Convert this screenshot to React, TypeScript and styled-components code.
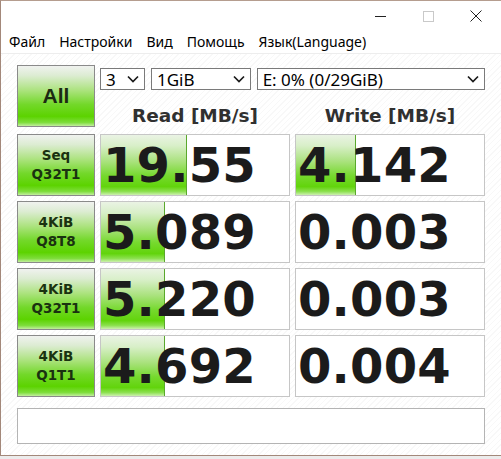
import React from "react";
import styled, { createGlobalStyle } from "styled-components";

const GlobalStyle = createGlobalStyle`
  html, body {
    margin: 0;
    padding: 0;
    background: #ececec;
  }
  * {
    box-sizing: border-box;
  }
`;

const Window = styled.div`
  height: 456px;
  display: flex;
  flex-direction: column;
  background: #fff;
  border-top: 1px solid #b59d8f;
  border-left: 1px solid #a3887a;
  border-bottom: 1px solid #a3887a;
  overflow: hidden;
`;

const TitleBar = styled.div`
  height: 30px;
  display: flex;
  justify-content: flex-end;
  padding-right: 1px;
`;

const CaptionButton = styled.div`
  width: 48px;
  display: flex;
  align-items: center;
  justify-content: center;
`;

const MenuBar = styled.div`
  height: 23px;
  display: flex;
  align-items: center;
  padding-left: 1px;
  border-bottom: 1px solid #ededed;
  font-family: "Noto Sans", "DejaVu Sans", sans-serif;
  font-size: 14px;
  color: #000;
`;

const MenuItem = styled.span`
  padding: 0 7px;
  line-height: 22px;
`;

const Client = styled.div`
  flex: 1;
  padding: 11px 0 0 16px;
  background: repeating-linear-gradient(
    -45deg,
    #ffffff 0px,
    #ffffff 3px,
    #f8f8f8 3px,
    #f8f8f8 4px
  );
`;

const Grid = styled.div`
  display: grid;
  grid-template-columns: 78px 190px 190px;
  grid-template-rows: 64px repeat(4, 62px);
  gap: 5px;
`;

const greenFace = `linear-gradient(
  to bottom,
  #f0f2ef 0%,
  #dcecd2 16%,
  #ade380 40%,
  #73d82a 64%,
  #5cd300 84%,
  #7ddd3a 94%,
  #c2ee9e 100%
)`;

const GreenButton = styled.div<{ $big?: boolean }>`
  height: 62px;
  border: 1px solid #8a8a8a;
  background: ${greenFace};
  display: flex;
  flex-direction: column;
  align-items: center;
  justify-content: center;
  font-family: ${(p) => (p.$big ? `"Liberation Sans", Arial, sans-serif` : `"DejaVu Sans", Verdana, sans-serif`)};
  font-weight: bold;
  font-size: ${(p) => (p.$big ? "21px" : "13.5px")};
  line-height: ${(p) => (p.$big ? "24px" : "19px")};
  color: ${(p) => (p.$big ? "#1c2a12" : "#1a3210")};
`;

const Controls = styled.div`
  grid-column: 2 / 4;
  display: flex;
  flex-direction: column;
`;

const SelectRow = styled.div`
  margin-top: 3px;
  display: flex;
  gap: 6px;
`;

const Select = styled.div<{ $w: number }>`
  width: ${(p) => p.$w}px;
  height: 22px;
  border: 1px solid #7a7a7a;
  background: #fff;
  display: flex;
  align-items: center;
  justify-content: space-between;
  padding: 0 5px 0 5px;
  font-family: "Noto Sans", "DejaVu Sans", sans-serif;
  font-size: 17px;
  color: #000;
`;

const HeaderRow = styled.div`
  margin-top: 15px;
  display: flex;
  gap: 5px;
`;

const Header = styled.div`
  width: 190px;
  text-align: center;
  font-family: "DejaVu Sans", Verdana, sans-serif;
  font-weight: bold;
  font-size: 18.5px;
  line-height: 22px;
  color: #303030;
`;

const barFace = `linear-gradient(
  to bottom,
  #eaf3e4 0%,
  #d8efc8 18%,
  #aae27e 44%,
  #76d92e 68%,
  #62d40c 86%,
  #8be04e 94%,
  #cdf0b0 100%
)`;

const ResultCell = styled.div<{ $bar: number }>`
  height: 62px;
  border: 1px solid #c6c6c6;
  background: ${(p) =>
    p.$bar > 0
      ? `linear-gradient(#5aa82c, #5aa82c) ${p.$bar - 1}px 0 / 1px 100% no-repeat,
         ${barFace} 0 0 / ${p.$bar}px 100% no-repeat, #fff`
      : "#fff"};
  display: flex;
  align-items: center;
  padding-left: 2px;
  font-family: "DejaVu Sans", Verdana, sans-serif;
  font-weight: bold;
  font-size: 48px;
  color: #1b1b1b;
  letter-spacing: 0.2px;
`;

const StatusBar = styled.div`
  margin-top: 11px;
  width: 468px;
  height: 36px;
  border: 1px solid #b4b4b4;
  background: #fff;
`;

const Chevron = () => (
  <svg width="12" height="8" viewBox="0 0 12 8">
    <polyline points="1,1.5 6,6.5 11,1.5" fill="none" stroke="#1a1a1a" strokeWidth="1.7" />
  </svg>
);

const rows = [
  { a: "Seq", b: "Q32T1", read: "19.55", rBar: 86, write: "4.142", wBar: 60 },
  { a: "4KiB", b: "Q8T8", read: "5.089", rBar: 64, write: "0.003", wBar: 0 },
  { a: "4KiB", b: "Q32T1", read: "5.220", rBar: 64, write: "0.003", wBar: 0 },
  { a: "4KiB", b: "Q1T1", read: "4.692", rBar: 64, write: "0.004", wBar: 0 },
];

const menu = ["Файл", "Настройки", "Вид", "Помощь", "Язык(Language)"];

export default function App() {
  return (
    <>
      <GlobalStyle />
      <Window>
        <TitleBar>
          <CaptionButton>
            <svg width="11" height="11" viewBox="0 0 11 11">
              <line x1="0" y1="5.5" x2="11" y2="5.5" stroke="#222" strokeWidth="1" />
            </svg>
          </CaptionButton>
          <CaptionButton>
            <svg width="11" height="11" viewBox="0 0 11 11">
              <rect x="0.5" y="0.5" width="10" height="10" fill="none" stroke="#c9c9c9" strokeWidth="1" />
            </svg>
          </CaptionButton>
          <CaptionButton>
            <svg width="12" height="12" viewBox="0 0 12 12">
              <line x1="0.5" y1="0.5" x2="11.5" y2="11.5" stroke="#222" strokeWidth="1" />
              <line x1="11.5" y1="0.5" x2="0.5" y2="11.5" stroke="#222" strokeWidth="1" />
            </svg>
          </CaptionButton>
        </TitleBar>
        <MenuBar>
          {menu.map((m) => (
            <MenuItem key={m}>{m}</MenuItem>
          ))}
        </MenuBar>
        <Client>
          <Grid>
            <GreenButton $big>All</GreenButton>
            <Controls>
              <SelectRow>
                <Select $w={45}>
                  <span>3</span>
                  <Chevron />
                </Select>
                <Select $w={100}>
                  <span>1GiB</span>
                  <Chevron />
                </Select>
                <Select $w={229}>
                  <span>E: 0% (0/29GiB)</span>
                  <Chevron />
                </Select>
              </SelectRow>
              <HeaderRow>
                <Header>Read [MB/s]</Header>
                <Header>Write [MB/s]</Header>
              </HeaderRow>
            </Controls>
            {rows.map((r, i) => (
              <React.Fragment key={i}>
                <GreenButton>
                  <span>{r.a}</span>
                  <span>{r.b}</span>
                </GreenButton>
                <ResultCell $bar={r.rBar}>{r.read}</ResultCell>
                <ResultCell $bar={r.wBar}>{r.write}</ResultCell>
              </React.Fragment>
            ))}
          </Grid>
          <StatusBar />
        </Client>
      </Window>
    </>
  );
}
